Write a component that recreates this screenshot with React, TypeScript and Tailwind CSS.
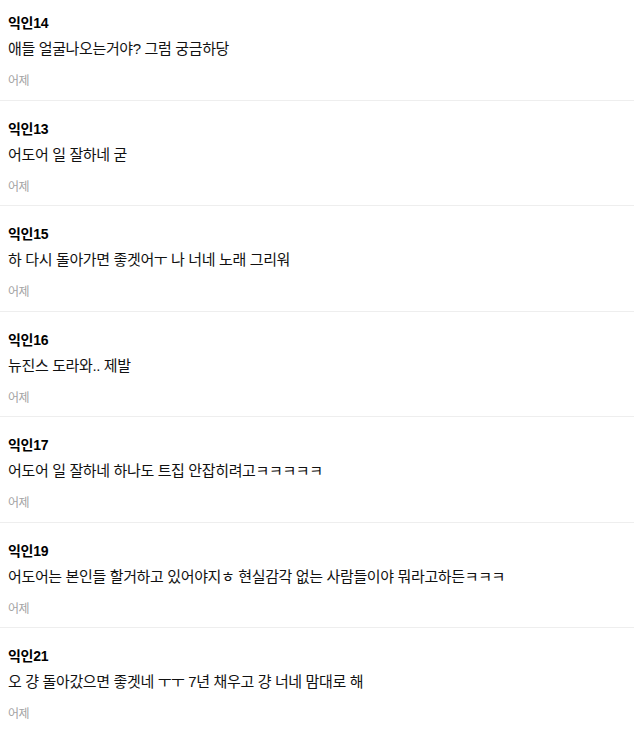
import React from "react";

const comments = [
  { name: "익인14", text: "애들 얼굴나오는거야? 그럼 궁금하당" },
  { name: "익인13", text: "어도어 일 잘하네 굳" },
  { name: "익인15", text: "하 다시 돌아가면 좋겟어ㅜ 나 너네 노래 그리워" },
  { name: "익인16", text: "뉴진스 도라와.. 제발" },
  { name: "익인17", text: "어도어 일 잘하네 하나도 트집 안잡히려고ㅋㅋㅋㅋㅋ" },
  { name: "익인19", text: "어도어는 본인들 할거하고 있어야지ㅎ 현실감각 없는 사람들이야 뭐라고하든ㅋㅋㅋ" },
  { name: "익인21", text: "오 걍 돌아갔으면 좋겟네 ㅜㅜ 7년 채우고 걍 너네 맘대로 해" },
];

export default function App() {
  return (
    <div
      className="w-[634px] h-[731px] overflow-hidden bg-white"
      style={{ fontFamily: '"Liberation Sans", "Noto Sans CJK KR", sans-serif' }}
    >
      <div className="flex flex-col">
        {comments.map((c, i) => (
          <div
            key={i}
            className={`border-b border-[#eeeeee] px-2 pb-[10.5px] ${i === 0 ? "pt-[13px]" : "pt-[18px]"}`}
          >
            <div className="text-[14px] leading-[20px] font-bold text-black tracking-[-0.3px]">
              {c.name}
            </div>
            <div className="mt-[5px] text-[15px] leading-[22px] text-[#111] tracking-[-0.36px]">
              {c.text}
            </div>
            <div className="mt-[13px] text-[12px] leading-[16px] text-[#a3a3a3] tracking-[-0.5px]">
              어제
            </div>
          </div>
        ))}
      </div>
    </div>
  );
}
